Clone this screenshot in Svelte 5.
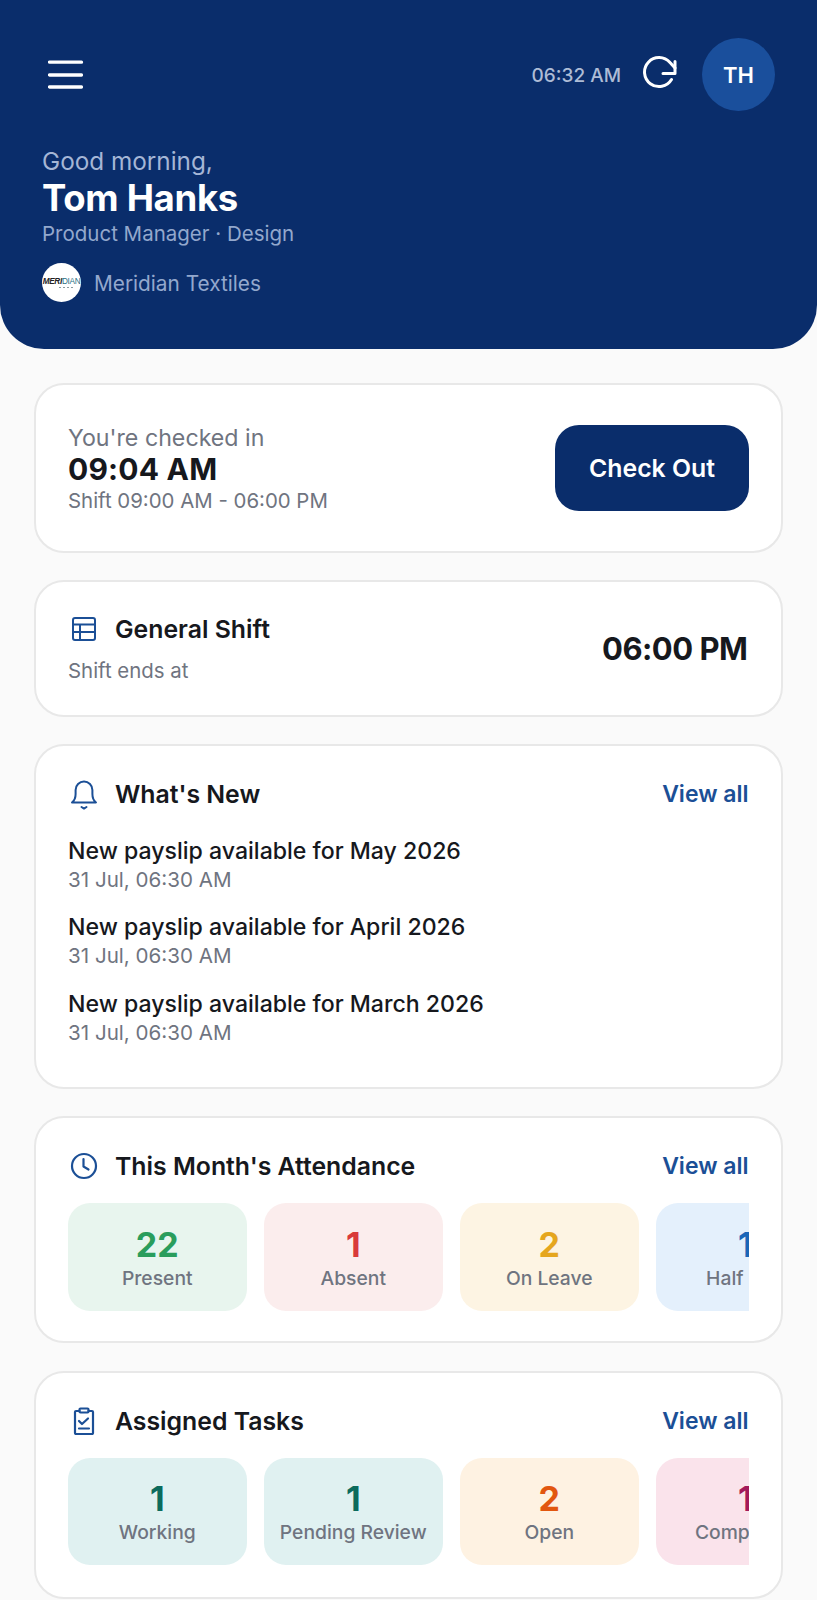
<script>
  const news = [
    'New payslip available for May 2026',
    'New payslip available for April 2026',
    'New payslip available for March 2026'
  ];
  const attendance = [
    { n: '22', l: 'Present', bg: '#e8f5ee', c: '#2a9d5c' },
    { n: '1', l: 'Absent', bg: '#fbeded', c: '#d93a3a' },
    { n: '2', l: 'On Leave', bg: '#fdf4e3', c: '#e5a61e' },
    { n: '1', l: 'Half Day', bg: '#e4f0fc', c: '#1a66b8' }
  ];
  const tasks = [
    { n: '1', l: 'Working', bg: '#e0f1f1', c: '#0b6b5d' },
    { n: '1', l: 'Pending Review', bg: '#e0f1f1', c: '#0b6b5d' },
    { n: '2', l: 'Open', bg: '#fef2e2', c: '#e2570f' },
    { n: '1', l: 'Completed', bg: '#fae3eb', c: '#a3195b' }
  ];
</script>

<div class="page">
  <header class="hero">
    <div class="topbar">
      <svg class="menu" width="36" height="30" viewBox="0 0 36 30" fill="none" stroke="#fff" stroke-width="3.3" stroke-linecap="round">
        <path d="M1.500 2.200h32M1.500 15h32M1.500 27h32" />
      </svg>
      <div class="top-right">
        <span class="clock">06:32 AM</span>
        <svg class="refresh" width="34" height="34" viewBox="0 0 34 34" fill="none" stroke="#fff" stroke-width="3" stroke-linecap="round" stroke-linejoin="round">
          <path d="M28.500 24.500A14.500 14.500 0 1 1 27 7.600L32 13" />
          <path d="M32 6.500v12H20" />
        </svg>
        <div class="avatar">TH</div>
      </div>
    </div>
    <div class="greeting">Good morning,</div>
    <div class="name">Tom Hanks</div>
    <div class="role">Product Manager · Design</div>
    <div class="company">
      <div class="logo">
        <div class="logo-word"><span class="m1">MERI</span><span class="m2">DIAN</span></div>
        <div class="logo-marks"><i></i><i></i><i></i><i></i></div>
      </div>
      <span class="company-name">Meridian Textiles</span>
    </div>
  </header>

  <main class="content">
    <section class="card checkin">
      <div class="ci-text">
        <div class="ci-label">You're checked in</div>
        <div class="ci-time">09:04 AM</div>
        <div class="ci-shift">Shift 09:00 AM - 06:00 PM</div>
      </div>
      <button class="checkout">Check Out</button>
    </section>

    <section class="card shift">
      <div class="shift-left">
        <div class="title-row">
          <svg class="icon" width="30" height="28" viewBox="0 0 30 28" fill="none" stroke="#1b4f96" stroke-width="2" stroke-linejoin="round">
            <rect x="5" y="3" width="22" height="22" rx="2" />
            <path d="M5 9.500h22M5 17h22M12 9.500V25" />
          </svg>
          <h2>General Shift</h2>
        </div>
        <div class="shift-sub">Shift ends at</div>
      </div>
      <div class="shift-time">06:00 PM</div>
    </section>

    <section class="card news">
      <div class="head">
        <div class="title-row">
          <svg class="icon" width="30" height="32" viewBox="0 0 30 32" fill="none" stroke="#1b4f96" stroke-width="2" stroke-linecap="round" stroke-linejoin="round">
            <path d="M4 24.500c2.800-2.200 3.600-4.500 3.600-8.500v-4a8.400 8.400 0 0 1 16.800 0v4c0 4 .8 6.300 3.600 8.500z" />
            <path d="M13.500 29l2.500 1.600 2.500-1.600" />
          </svg>
          <h2>What's New</h2>
        </div>
        <span class="view">View all</span>
      </div>
      <div class="news-list">
        {#each news as item}
          <div class="news-item">
            <div class="news-title">{item}</div>
            <div class="news-date">31 Jul, 06:30 AM</div>
          </div>
        {/each}
      </div>
    </section>

    <section class="card stats attendance">
      <div class="head">
        <div class="title-row">
          <svg class="icon" width="30" height="28" viewBox="0 0 30 28" fill="none" stroke="#1b4f96" stroke-width="2.200" stroke-linecap="round" stroke-linejoin="round">
            <circle cx="16" cy="14" r="12" />
            <path d="M15.500 7v7.500l5 3" />
          </svg>
          <h2>This Month's Attendance</h2>
        </div>
        <span class="view">View all</span>
      </div>
      <div class="tiles">
        {#each attendance as t}
          <div class="tile" style="background:{t.bg}">
            <div class="tile-n" style="color:{t.c}">{t.n}</div>
            <div class="tile-l">{t.l}</div>
          </div>
        {/each}
      </div>
    </section>

    <section class="card stats tasks">
      <div class="head">
        <div class="title-row">
          <svg class="icon" width="30" height="28" viewBox="0 0 30 28" fill="none" stroke="#1b4f96" stroke-width="2.200" stroke-linecap="round" stroke-linejoin="round">
            <path d="M11.500 4H8a1 1 0 0 0-1 1v21a1 1 0 0 0 1 1h16a1 1 0 0 0 1-1V5a1 1 0 0 0-1-1h-3.500" />
            <rect x="11.500" y="1.500" width="9" height="4" rx="1" />
            <path d="M11 14l3 3 6-5.500M11 21.500h10" />
          </svg>
          <h2>Assigned Tasks</h2>
        </div>
        <span class="view">View all</span>
      </div>
      <div class="tiles">
        {#each tasks as t}
          <div class="tile" style="background:{t.bg}">
            <div class="tile-n" style="color:{t.c}">{t.n}</div>
            <div class="tile-l">{t.l}</div>
          </div>
        {/each}
      </div>
    </section>
  </main>
</div>

<style>
  :global(body) {
    margin: 0;
    background: #fafafa;
  }
  .page {
    width: 817px;
    height: 1600px;
    overflow: hidden;
    font-family: Inter, "Liberation Sans", sans-serif;
    color: #16181d;
  }
  .hero {
    box-sizing: border-box;
    height: 349px;
    background: #0a2d6b;
    border-radius: 0 0 44px 44px;
    padding: 38px 42px 0 42px;
  }
  .topbar {
    display: flex;
    align-items: center;
    justify-content: space-between;
    height: 73px;
    margin-bottom: 35px;
  }
  .menu { margin-left: 6px; margin-top: 1px; }
  .top-right {
    display: flex;
    align-items: center;
  }
  .clock {
    font-size: 19px;
    font-weight: 500;
    color: #aebcd6;
    margin-right: 22px;
    margin-top: 2px;
  }
  .refresh {
    margin-right: 25px;
    margin-bottom: 5px;
  }
  .avatar {
    width: 73px;
    height: 73px;
    border-radius: 50%;
    background: #1a4f9c;
    color: #fff;
    font-size: 22px;
    font-weight: 600;
    display: flex;
    align-items: center;
    justify-content: center;
  }
  .greeting {
    font-size: 24.300px;
    line-height: 30px;
    color: #a5b6d6;
  }
  .name {
    font-size: 36.500px;
    line-height: 44px;
    font-weight: 700;
    color: #fff;
    letter-spacing: -0.3px;
  }
  .role {
    font-size: 20.500px;
    line-height: 27px;
    color: #93a8cd;
  }
  .company {
    display: flex;
    align-items: center;
    gap: 13px;
    margin-top: 16px;
    font-size: 20.800px;
    color: #93a8cd;
  }
  .company-name { padding-top: 2px; }
  .logo {
    width: 39px;
    height: 39px;
    border-radius: 50%;
    background: #fff;
    display: flex;
    flex-direction: column;
    align-items: center;
    justify-content: center;
    font-family: "Liberation Sans", sans-serif;
    box-sizing: border-box;
  }
  .logo-word {
    font-size: 8.200px;
    line-height: 10px;
    letter-spacing: -0.3px;
  }
  .logo-marks {
    display: flex;
    gap: 2px;
    margin-left: 8px;
  }
  .logo-marks i {
    width: 2px;
    height: 1px;
    background: #8a9a9e;
  }
  .m1 { font-weight: 700; font-style: italic; color: #222; }
  .m2 { color: #2a6f85; }
  .content {
    display: flex;
    flex-direction: column;
    gap: 27.500px;
    padding: 34px 34px 0 34px;
  }
  .card {
    background: #fff;
    border: 2px solid #e8e8e8;
    border-radius: 30px;
    padding: 0 32px;
    box-sizing: border-box;
  }
  .checkin {
    height: 169.500px;
    display: flex;
    align-items: center;
    justify-content: space-between;
  }
  .ci-text { padding-top: 4px; }
  .ci-label {
    font-size: 23.200px;
    line-height: 28px;
    color: #6f7480;
  }
  .ci-time {
    font-size: 30px;
    line-height: 34px;
    font-weight: 700;
    letter-spacing: 0.2px;
  }
  .ci-shift {
    font-size: 20.400px;
    line-height: 30px;
    color: #6f7480;
  }
  .checkout {
    width: 194px;
    height: 86px;
    border: none;
    border-radius: 24px;
    background: #0a2d6b;
    color: #fff;
    font-family: inherit;
    font-size: 24.800px;
    font-weight: 600;
    padding: 0;
  }
  .shift {
    height: 136.500px;
    display: flex;
    align-items: center;
    justify-content: space-between;
  }
  .shift-left { padding-top: 2px; }
  .title-row {
    display: flex;
    align-items: center;
    gap: 17px;
  }
  .icon { flex: none; }
  h2 {
    margin: 0;
    font-size: 24.800px;
    line-height: 32px;
    font-weight: 600;
  }
  .shift-sub {
    font-size: 20.400px;
    line-height: 28px;
    color: #6f7480;
    margin-top: 12px;
  }
  .shift-time {
    font-size: 31px;
    font-weight: 700;
    letter-spacing: -0.5px;
    margin-right: 1.500px;
  }
  .news {
    height: 344.500px;
    padding-top: 31px;
  }
  .head {
    display: flex;
    align-items: center;
    justify-content: space-between;
    height: 34px;
  }
  .view {
    font-size: 23px;
    font-weight: 600;
    color: #1b4f96;
    margin-right: 0.500px;
  }
  .news-list {
    display: flex;
    flex-direction: column;
    gap: 20px;
    margin-top: 25.500px;
  }
  .news-title {
    font-size: 23.100px;
    line-height: 29px;
    font-weight: 500;
  }
  .news-date {
    font-size: 20.600px;
    line-height: 27.500px;
    color: #6f7480;
  }
  .stats {
    padding-top: 31px;
  }
  .attendance { height: 227px; }
  .tasks { height: 228px; }
  .tiles {
    display: flex;
    gap: 17.500px;
    margin-top: 20px;
    overflow: hidden;
  }
  .tile {
    flex: none;
    width: 178.500px;
    height: 107.500px;
    border-radius: 22px;
    display: flex;
    flex-direction: column;
    align-items: center;
    justify-content: center;
    box-sizing: border-box;
    padding-top: 2px;
  }
  .tile-n {
    font-size: 34px;
    line-height: 40px;
    font-weight: 700;
  }
  .tile-l {
    font-size: 19.300px;
    line-height: 26px;
    font-weight: 500;
    color: #6f7480;
  }
</style>
